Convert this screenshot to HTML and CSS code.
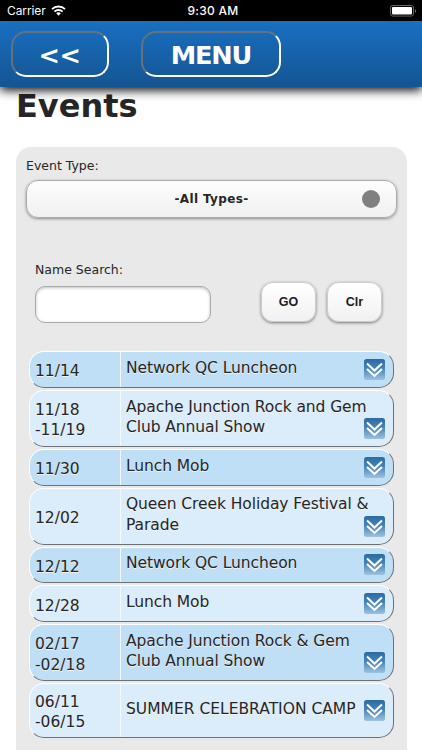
FILE: index.html
```
<!DOCTYPE html>
<html lang="en">
<head>
	<meta charset="utf-8">
	<title>Events</title>
	<link rel="stylesheet" href="styles.css">
</head>
<body>
	<svg class="defs" width="0" height="0">
		<defs>
			<linearGradient id="arrowbg" x1="0" y1="0" x2="0" y2="1">
				<stop offset="0" stop-color="#2a6ba6"/>
				<stop offset="0.45" stop-color="#4683b6"/>
				<stop offset="1" stop-color="#9dc3e0"/>
			</linearGradient>
			<symbol id="down" viewBox="0 0 21 21">
				<rect width="21" height="21" rx="2.5" fill="url(#arrowbg)"/>
				<path d="M3 4.6L10.5 11.6L18 4.6M3 10L10.5 17L18 10" fill="none" stroke="#fff" stroke-width="2"/>
			</symbol>
		</defs>
	</svg>

	<div class="status">
		<div class="carrier">
			<span>Carrier</span>
			<svg class="wifi" width="15" height="11" viewBox="0 0 15 11">
				<g fill="none" stroke="#fff" stroke-width="1.9">
					<path d="M1 4.1A9.3 9.3 0 0 1 14 4.1"/>
					<path d="M3.4 6.6A5.9 5.9 0 0 1 11.6 6.6"/>
				</g>
				<path d="M5.2 8.3A3.3 3.3 0 0 1 9.8 8.3L7.5 10.7Z" fill="#fff"/>
			</svg>
		</div>
		<div class="time">9:30 AM</div>
		<svg class="battery" width="27" height="12" viewBox="0 0 27 12">
			<rect x="0.5" y="0.5" width="23" height="10.6" rx="2.3" fill="none" stroke="#666"/>
			<rect x="2" y="2" width="20" height="7.6" rx="1" fill="#fff"/>
			<path d="M24.8 4A2 2 0 0 1 24.8 7.8Z" fill="#666"/>
		</svg>
	</div>

	<div class="header">
		<div class="nav back">&lt;&lt;</div>
		<div class="nav menu">MENU</div>
	</div>

	<h1>Events</h1>

	<div class="panel">
		<label class="type_label">Event Type:</label>
		<div class="select">
			<span>-All Types-</span>
			<i class="dot"></i>
		</div>
		<div class="search">
			<div class="field">
				<label for="name">Name Search:</label>
				<input id="name" type="text">
			</div>
			<button class="btn">GO</button>
			<button class="btn">Clr</button>
		</div>

		<div class="events">
			<div class="row dark">
				<div class="date">11/14</div>
				<div class="name">Network QC Luncheon</div>
				<svg class="arrow"><use href="#down"/></svg>
			</div>
			<div class="row tall">
				<div class="date">11/18<br>-11/19</div>
				<div class="name">Apache Junction Rock and Gem<br>Club Annual Show</div>
				<svg class="arrow"><use href="#down"/></svg>
			</div>
			<div class="row dark">
				<div class="date">11/30</div>
				<div class="name">Lunch Mob</div>
				<svg class="arrow"><use href="#down"/></svg>
			</div>
			<div class="row tall">
				<div class="date">12/02</div>
				<div class="name">Queen Creek Holiday Festival &amp;<br>Parade</div>
				<svg class="arrow"><use href="#down"/></svg>
			</div>
			<div class="row dark">
				<div class="date">12/12</div>
				<div class="name">Network QC Luncheon</div>
				<svg class="arrow"><use href="#down"/></svg>
			</div>
			<div class="row">
				<div class="date">12/28</div>
				<div class="name">Lunch Mob</div>
				<svg class="arrow"><use href="#down"/></svg>
			</div>
			<div class="row tall dark">
				<div class="date">02/17<br>-02/18</div>
				<div class="name">Apache Junction Rock &amp; Gem<br>Club Annual Show</div>
				<svg class="arrow"><use href="#down"/></svg>
			</div>
			<div class="row last">
				<div class="date">06/11<br>-06/15</div>
				<div class="name">SUMMER CELEBRATION CAMP</div>
				<svg class="arrow"><use href="#down"/></svg>
			</div>
		</div>
	</div>
</body>
</html>
```
FILE: styles.css
```
*{
	box-sizing: border-box;
}
html, body{
	height: 750px;
	overflow: hidden;
}
body{
	margin: 0;
	background: #fff;
	color: #262626;
	font-family: Verdana, "DejaVu Sans", sans-serif;
}
.defs{
	display: block;
}

/* phone status bar */
.status{
	display: grid;
	grid-template-columns: 1fr auto 1fr;
	align-items: center;
	height: 21px;
	padding: 0 5px 0 7px;
	background: #000;
	color: #fff;
	font: 12px/21px Inter, "Liberation Sans", sans-serif;
}
.carrier{
	display: flex;
	align-items: center;
	gap: 5px;
	letter-spacing: -0.1px;
}
.time{
	font-weight: 500;
	letter-spacing: 0.3px;
	padding-left: 2px;
}
.battery{
	justify-self: end;
}

/* blue bar */
.header{
	position: relative;
	display: flex;
	gap: 32px;
	height: 66px;
	padding: 10px 11px;
	background: linear-gradient(#196fc1, #145592);
	box-shadow: 0 3px 10px #000;
}
.nav{
	height: 46px;
	border: 2px solid;
	border-color: #64727f #fff #fff #64727f;
	border-radius: 15px;
	color: #fff;
	font-size: 25.6px;
	font-weight: bold;
	letter-spacing: -1.2px;
	line-height: 44px;
	text-align: center;
}
.back{
	width: 98px;
	padding-right: 1px;
	letter-spacing: -0.5px;
}
.menu{
	width: 140px;
}

h1{
	height: 60px;
	margin: 0;
	padding-left: 16px;
	font-size: 32px;
	line-height: 38px;
}

.panel{
	height: 640px;
	margin: 0 15px 0 16px;
	padding: 10px 10px 0;
	border-radius: 15px;
	background: #e9e9e9;
}
label{
	display: block;
	font-size: 12.5px;
	line-height: 18px;
}
.select{
	display: flex;
	align-items: center;
	justify-content: center;
	position: relative;
	height: 38px;
	margin-top: 5px;
	border: 1px solid #aaa;
	border-radius: 12px;
	background: linear-gradient(#fdfdfd, #f1f1f1);
	box-shadow: 0 1px 3px rgba(0,0,0,0.4);
	font-size: 12px;
	font-weight: bold;
	letter-spacing: 0.35px;
}
.dot{
	position: absolute;
	right: 16px;
	top: 9px;
	width: 18px;
	height: 18px;
	border-radius: 50%;
	background: #808080;
}
.search{
	display: flex;
	align-items: flex-end;
	margin: 43px 4px 0 9px;
	height: 62px;
}
.field{
	margin-right: 50px;
}
.field input{
	display: block;
	width: 176px;
	height: 37px;
	margin: 7px 0 0;
	border: 1px solid #aaa;
	border-radius: 10px;
	background: #fff;
	box-shadow: inset 0 1px 3px rgba(0,0,0,0.25);
}
.btn{
	width: 55px;
	height: 40px;
	margin: 0 11px 1px 0;
	padding: 0;
	border: 1px solid #ccc;
	border-radius: 12px;
	background: linear-gradient(#fff, #f1f1f1);
	box-shadow: 0 1px 3px rgba(0,0,0,0.5);
	color: #1c1c1c;
	font: bold 12.5px "Liberation Sans", Arial, sans-serif;
}

/* event list */
.events{
	display: flex;
	flex-direction: column;
	gap: 2px;
	margin: 28px 3px 0;
}
.row{
	display: flex;
	height: 36.8px;
	padding-right: 8px;
	border: 1px solid;
	border-color: #fff #6d7278 #6d7278 #fff;
	border-radius: 15px;
	background: #dbecfa;
	font-size: 15.5px;
	line-height: 20.3px;
	text-shadow: 0 1px 0 #f3f3f3;
}
.dark{
	background: #bfdff6;
}
.tall{
	height: 57px;
}
.last{
	height: 54.5px;
}
.date{
	display: flex;
	flex: none;
	align-items: center;
	width: 91px;
	padding: 4px 0 0 5px;
	border-right: 1px solid #f4f8fb;
}
.name{
	display: flex;
	flex: 1;
	align-items: center;
	min-width: 0;
	padding: 0 0 3px 5px;
	letter-spacing: -0.08px;
	white-space: nowrap;
}
.arrow{
	flex: none;
	align-self: flex-end;
	width: 21px;
	height: 21px;
	margin-bottom: 7px;
}
.last .arrow{
	margin-bottom: 16px;
}
.last .name{
	padding-bottom: 2px;
	letter-spacing: 0;
}
```
